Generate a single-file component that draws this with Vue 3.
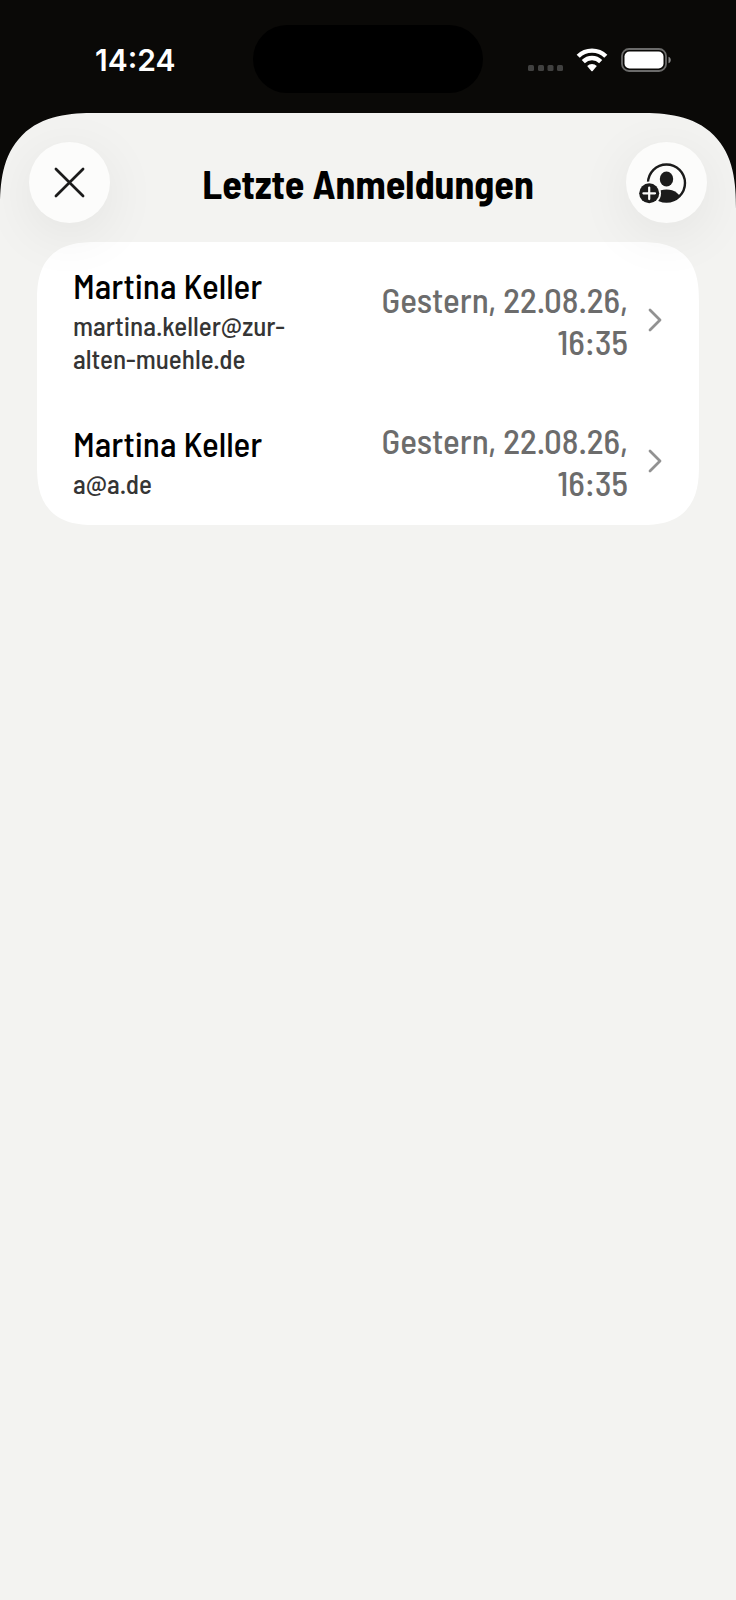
<script setup>
const logins = [
  { name: 'Martina Keller', email: 'martina.keller@zur-alten-muehle.de', date: 'Gestern, 22.08.26, 16:35' },
  { name: 'Martina Keller', email: 'a@a.de', date: 'Gestern, 22.08.26, 16:35' },
]
</script>

<template>
  <div class="screen">
    <div class="status">
      <time class="clock">14:24</time>
      <div class="island"></div>
      <div class="indicators">
        <svg class="dots" width="35" height="24" viewBox="0 0 35 24" aria-hidden="true">
          <g fill="#414140">
            <rect x="0" y="17" width="6" height="6" rx="1.500" />
            <rect x="10" y="17" width="6" height="6" rx="1.500" />
            <rect x="19.500" y="17" width="6" height="6" rx="1.500" />
            <rect x="29" y="17" width="6" height="6" rx="1.500" />
          </g>
        </svg>
        <svg class="wifi" width="32" height="24" viewBox="0 0 32 24" aria-hidden="true">
          <g fill="none" stroke="#fff" stroke-width="4.400">
            <path d="M2.200 8.300a19.500 19.500 0 0 1 27.600 0" />
            <path d="M7.300 13.600a12.300 12.300 0 0 1 17.400 0" />
          </g>
          <path d="M11.200 17.900a6.900 6.900 0 0 1 9.600 0L16.700 22.900a1 1 0 0 1-1.400 0z" fill="#fff" />
        </svg>
        <svg class="battery" width="51" height="24" viewBox="0 0 51 24" aria-hidden="true">
          <rect x="1" y="1" width="44" height="22" rx="7" fill="none" stroke="#6b6b6a" stroke-width="1.800" />
          <rect x="3.500" y="3.500" width="39" height="17" rx="5" fill="#fff" />
          <path d="M47.500 8.800c3 1 3 5.500 0 6.500z" fill="#8a8a89" />
        </svg>
      </div>
    </div>

    <main class="sheet">
      <header class="bar">
        <button class="round" type="button" aria-label="Schließen">
          <svg width="31" height="31" viewBox="0 0 32 32" aria-hidden="true">
            <path d="M2 2L30 30M30 2L2 30" fill="none" stroke="#1b1b1b" stroke-width="2.800" stroke-linecap="round" />
          </svg>
        </button>
        <h1>Letzte Anmeldungen</h1>
        <button class="round" type="button" aria-label="Konto hinzufügen">
          <svg width="55" height="42" viewBox="7.500 0 55 42" aria-hidden="true">
            <defs>
              <clipPath id="portrait">
                <circle cx="35" cy="21" r="19" />
              </clipPath>
            </defs>
            <circle cx="35" cy="21" r="18.500" fill="none" stroke="#1b1b1b" stroke-width="2.400" />
            <ellipse cx="35" cy="17" rx="6.700" ry="7.400" fill="#1b1b1b" />
            <ellipse cx="35" cy="38.500" rx="14.500" ry="11" fill="#1b1b1b" clip-path="url(#portrait)" />
            <circle cx="17.700" cy="31.300" r="11.800" fill="#fcfcfb" />
            <circle cx="17.700" cy="31.300" r="10" fill="#1b1b1b" />
            <path d="M17.700 25.500v11.600M11.900 31.300h11.600" stroke="#fcfcfb" stroke-width="2.200" stroke-linecap="round" />
          </svg>
        </button>
      </header>

      <ul class="card">
        <li v-for="login in logins" :key="login.email">
          <button class="row" type="button">
            <span class="who">
              <span class="name">{{ login.name }}</span>
              <span class="email">{{ login.email }}</span>
            </span>
            <span class="date">{{ login.date }}</span>
            <svg class="chevron" width="14" height="24" viewBox="0 0 14 24" aria-hidden="true">
              <path d="M2 2L12 12L2 22" fill="none" stroke="#929292" stroke-width="2.800" stroke-linecap="round" stroke-linejoin="round" />
            </svg>
          </button>
        </li>
      </ul>
    </main>
  </div>
</template>

<style>
body {
  background: #0a0907;
}
</style>

<style scoped>
.screen {
  min-height: 100vh;
  display: flex;
  flex-direction: column;
  background: #0a0907;
  font-family: "Barlow Semi Condensed", "Roboto Condensed", "Liberation Sans Narrow", Roboto, sans-serif;
}
.status {
  display: grid;
  grid-template-columns: 1fr 230px 1fr;
  align-items: center;
  padding: 25px 0 20px;
}
.clock {
  padding: 2px 0 0 95px;
  color: #fff;
  font: 600 30px/36px Inter, sans-serif;
}
.island {
  height: 68px;
  border-radius: 34px;
  background: #000;
}
.indicators {
  display: flex;
  align-items: center;
  justify-content: flex-end;
  gap: 13px;
  padding: 2px 64px 0 0;
}
.sheet {
  flex: 1;
  border-radius: 76px 76px 0 0;
  background: #f3f3f1;
  overflow: hidden;
}
.bar {
  position: relative;
  z-index: 1;
  display: flex;
  align-items: center;
  justify-content: space-between;
  padding: 29px 29px 19px;
}
.round {
  display: grid;
  place-items: center;
  width: 81px;
  height: 81px;
  padding: 0;
  border: 0;
  border-radius: 50%;
  background: #fcfcfb;
  box-shadow: 0 12px 56px rgba(0, 0, 0, 0.07);
}
h1 {
  margin: 0;
  color: #000;
  font-size: 40px;
  line-height: 48px;
  font-weight: 700;
}
.card {
  margin: 0 37px;
  padding: 0;
  border-radius: 48px;
  background: #fff;
  list-style: none;
}
@supports (corner-shape: superellipse(1.4)) {
  .sheet {
    border-radius: 96px 96px 0 0;
    corner-shape: superellipse(1.4);
  }
  .card {
    border-radius: 60px;
    corner-shape: superellipse(1.4);
  }
}
.row {
  display: grid;
  grid-template-columns: 1fr 1fr auto;
  align-items: center;
  column-gap: 20px;
  width: 100%;
  padding: 22px 37px 22px 36px;
  border: 0;
  background: none;
  font-family: inherit;
  font-weight: 500;
  text-align: left;
}
.who {
  display: flex;
  flex-direction: column;
  gap: 3px;
}
.name,
.date {
  font-size: 35px;
  line-height: 42px;
}
.name {
  color: #000;
}
.email {
  color: #353535;
  font-size: 27px;
  line-height: 33px;
}
.date {
  color: #6c6c6c;
  text-align: right;
}
</style>
